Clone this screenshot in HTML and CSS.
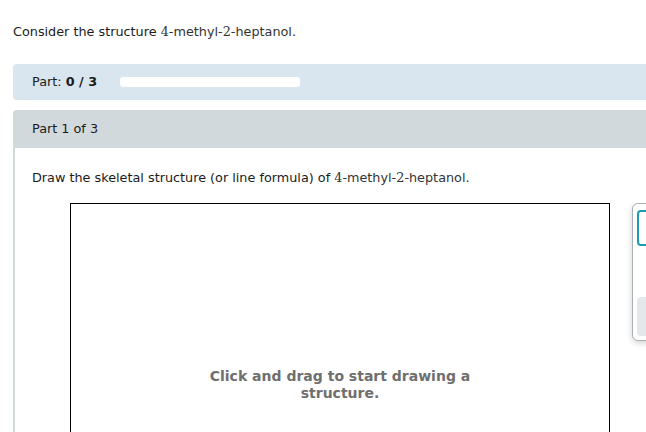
FILE: index.html
```html
<!doctype html>
<html lang="en">
<head>
  <meta charset="utf-8">
  <title>4-methyl-2-heptanol</title>
  <link rel="stylesheet" href="styles.css">
</head>
<body>
  <main class="question">
    <p class="prompt">Consider the structure <span class="chem"><span class="num">4</span>-methyl-<span class="num">2</span>-heptanol</span>.</p>

    <!-- progress over the parts -->
    <div class="progress">
      <span class="progress-label">Part: <b>0 / 3</b></span>
      <span class="progress-track"></span>
    </div>

    <section class="part">
      <header class="part-head">Part 1 of 3</header>
      <div class="part-body">
        <p class="task">Draw the skeletal structure (or line formula) of <span class="chem"><span class="num">4</span>-methyl-<span class="num">2</span>-heptanol</span>.</p>

        <div class="sketch-row">
          <div class="canvas">
            <div class="canvas-hint">Click and drag to start drawing a structure.</div>
          </div>
          <aside class="tools">
            <div class="tool-slot active"></div>
            <div class="tool-slot muted"></div>
          </aside>
        </div>
      </div>
    </section>
  </main>
</body>
</html>
```

FILE: styles.css
```css
*{ box-sizing:border-box }
html,body{ margin:0; overflow:hidden }
body{ font:12.8px/1.4 "DejaVu Sans", Verdana, sans-serif; color:#1b1b1b; background:#fff; width:646px; height:432px; }

.question{ padding:20px 0 0 13px; width:646px; }
.prompt{ margin:0 0 20px; height:24px; line-height:24px; }
.chem{ color:#333; }
.num{ font-family:"DejaVu Serif", serif; }

/* ===== Progress bar ===== */
.progress{ height:36px; background:#dae6ef; border-radius:4px 0 0 4px; display:flex; align-items:center; padding:0 0 0 19px; gap:23px; }
.progress-label b{ font-weight:700; }
.progress-track{ width:180px; height:10px; background:#fff; border-radius:3px; }

/* ===== Part ===== */
.part{ margin-top:10px; }
.part-head{ height:38px; line-height:38px; background:#d1d9dc; border-radius:4px 0 0 0; padding-left:19px; }
.part-body{ border-left:2px solid #d1d9dc; padding:20px 0 0 17px; height:284px; overflow:hidden; }
.task{ margin:0 0 15px; line-height:20px; }

.sketch-row{ display:flex; align-items:flex-start; gap:22px; padding:0 0 0 38px; height:230px; overflow:hidden; }
.canvas{ flex:none; width:540px; height:260px; border:1px solid #000; display:flex; flex-direction:column; align-items:center; padding-top:164px; }
.canvas-hint{ width:290px; text-align:center; font-weight:700; font-size:14px; line-height:17px; color:#6f6f6f; }

.tools{ flex:none; width:60px; height:138px; border:1px solid #a9b0b4; border-radius:6px; box-shadow:0 2px 6px rgba(0,0,0,.18); padding:6px 0 0 4px; background:#fff; }
.tool-slot{ border-radius:4px; }
.tool-slot.active{ height:36px; border:2px solid #1a9cb0; }
.tool-slot.muted{ height:39px; background:#e4e8ea; margin-top:51px; }
```
